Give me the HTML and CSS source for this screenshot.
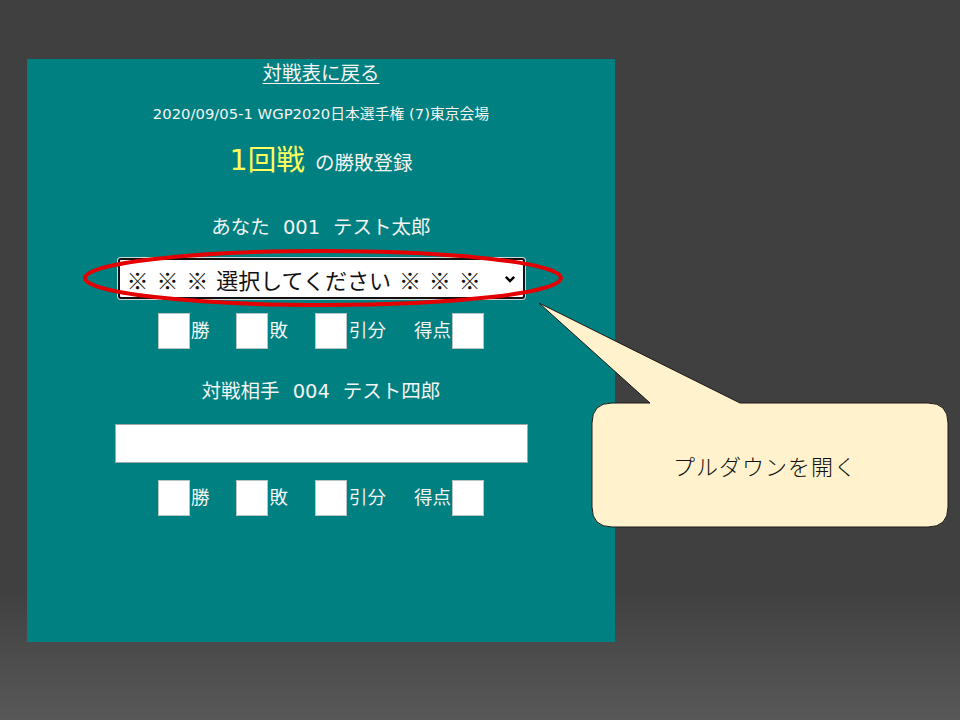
FILE: index.html
```html
<!DOCTYPE html>
<html lang="ja">
<head>
<meta charset="utf-8">
<title>勝敗登録</title>
<link rel="stylesheet" href="styles.css">
</head>
<body>
<div class="stage">
  <main class="panel">
    <a class="back" href="#">対戦表に戻る</a>
    <p class="info">2020/09/05-1 WGP2020日本選手権 (7)東京会場</p>
    <h1 class="title"><span class="round">1回戦</span> <span class="sub">の勝敗登録</span></h1>

    <div class="player"><span>あなた</span><span>001</span><span>テスト太郎</span></div>
    <div class="select">
      <span class="select-text">※ ※ ※ 選択してください ※ ※ ※</span>
      <svg class="chev" width="12" height="8" viewBox="0 0 12 8"><path d="M1.8 1.8 L6 6 L10.2 1.8" fill="none" stroke="#000" stroke-width="2.4"/></svg>
    </div>
    <div class="checks">
      <span class="box"></span><span class="lbl l1">勝</span>
      <span class="box"></span><span class="lbl l1">敗</span>
      <span class="box"></span><span class="lbl l2">引分</span>
      <span class="lbl l3">得点</span><span class="box"></span>
    </div>

    <div class="player opp"><span>対戦相手</span><span>004</span><span>テスト四郎</span></div>
    <div class="textbox"></div>
    <div class="checks">
      <span class="box"></span><span class="lbl l1">勝</span>
      <span class="box"></span><span class="lbl l1">敗</span>
      <span class="box"></span><span class="lbl l2">引分</span>
      <span class="lbl l3">得点</span><span class="box"></span>
    </div>
  </main>

  <svg class="ring" width="482" height="60" viewBox="0 0 482 60"><ellipse cx="241" cy="30" rx="238" ry="27" fill="none" stroke="#e40000" stroke-width="4"/></svg>

  <div class="callout">
    <svg class="bubble" width="420" height="232" viewBox="535 300 420 232">
      <path d="M612 403 L650 403 L539 303 L740 403 L928 403 Q948 403 948 423 L948 507 Q948 527 928 527 L612 527 Q592 527 592 507 L592 423 Q592 403 612 403 Z" fill="#fff2cc" stroke="#1a1a1a" stroke-width="1"/>
    </svg>
    <span class="callout-text">プルダウンを開く</span>
  </div>
</div>
</body>
</html>
```

FILE: styles.css
```css
html, body {
  margin: 0;
  padding: 0;
}
body {
  width: 960px;
  height: 720px;
  overflow: hidden;
  background: linear-gradient(to bottom, #404040 0%, #404040 82%, #585858 100%);
  font-family: "DejaVu Sans", "Noto Sans CJK JP", sans-serif;
}
.stage {
  position: relative;
  width: 960px;
  height: 720px;
  padding-top: 59px;
  box-sizing: border-box;
}
.panel {
  margin-left: 27px;
  width: 588px;
  height: 583px;
  background: #008080;
  display: flex;
  flex-direction: column;
  align-items: center;
  color: #f4f4f4;
}
.back {
  color: #f4f4f4;
  font-size: 19.5px;
  line-height: 30px;
  height: 30px;
  text-decoration: underline;
  text-decoration-thickness: 1px;
  text-underline-offset: 3px;
}
.info {
  margin: 15px 0 0;
  font-size: 14.8px;
  line-height: 20px;
  height: 20px;
  white-space: nowrap;
}
.title {
  margin: 15px 0 0;
  font-weight: normal;
  line-height: 40px;
  height: 40px;
  text-align: center;
  white-space: nowrap;
}
.round {
  color: #ffff5e;
  font-size: 28.5px;
}
.sub {
  font-size: 19.5px;
}
.player {
  margin-top: 34px;
  font-size: 19.5px;
  line-height: 30px;
  height: 30px;
  display: flex;
  gap: 13px;
}
.player.opp {
  margin-top: 28px;
}
.select {
  margin-top: 15px;
  width: 407px;
  height: 41px;
  box-sizing: border-box;
  background: #fff;
  border: 2px solid #111;
  border-radius: 3px;
  box-shadow: 0 0 0 1px #cfd8d8;
  display: flex;
  align-items: center;
  padding: 0 7px 0 7px;
  color: #111;
}
.select-text {
  flex: 1;
  font-family: "Noto Sans CJK JP", sans-serif;
  font-size: 22px;
  line-height: 30px;
  word-spacing: 3px;
  white-space: nowrap;
}
.chev {
  display: block;
}
.checks {
  margin-top: 14px;
  display: flex;
  align-items: center;
  height: 36px;
}
.box {
  width: 32px;
  height: 36px;
  box-sizing: border-box;
  background: #fff;
  border: 1px solid #b9c4c4;
}
.lbl {
  font-size: 18.5px;
  line-height: 30px;
}
.l1 {
  margin: 0 27px 0 1px;
}
.l2 {
  margin: 0 28px 0 2px;
}
.l3 {
  margin-right: 1px;
}
.textbox {
  margin-top: 17px;
  width: 413px;
  height: 39px;
  box-sizing: border-box;
  background: #fff;
  border: 1px solid #a0a8a8;
}
.textbox + .checks {
  margin-top: 17px;
}
.ring {
  position: absolute;
  left: 82px;
  top: 248px;
}
.callout {
  position: absolute;
  left: 535px;
  top: 300px;
  width: 420px;
  height: 232px;
}
.bubble {
  position: absolute;
  left: 0;
  top: 0;
}
.callout-text {
  position: absolute;
  left: 57px;
  top: 103px;
  width: 346px;
  height: 124px;
  display: flex;
  align-items: center;
  justify-content: center;
  font-family: "Noto Sans CJK JP", sans-serif;
  font-size: 22px;
  letter-spacing: 1px;
  color: #111;
  font-weight: 300;
}
```
